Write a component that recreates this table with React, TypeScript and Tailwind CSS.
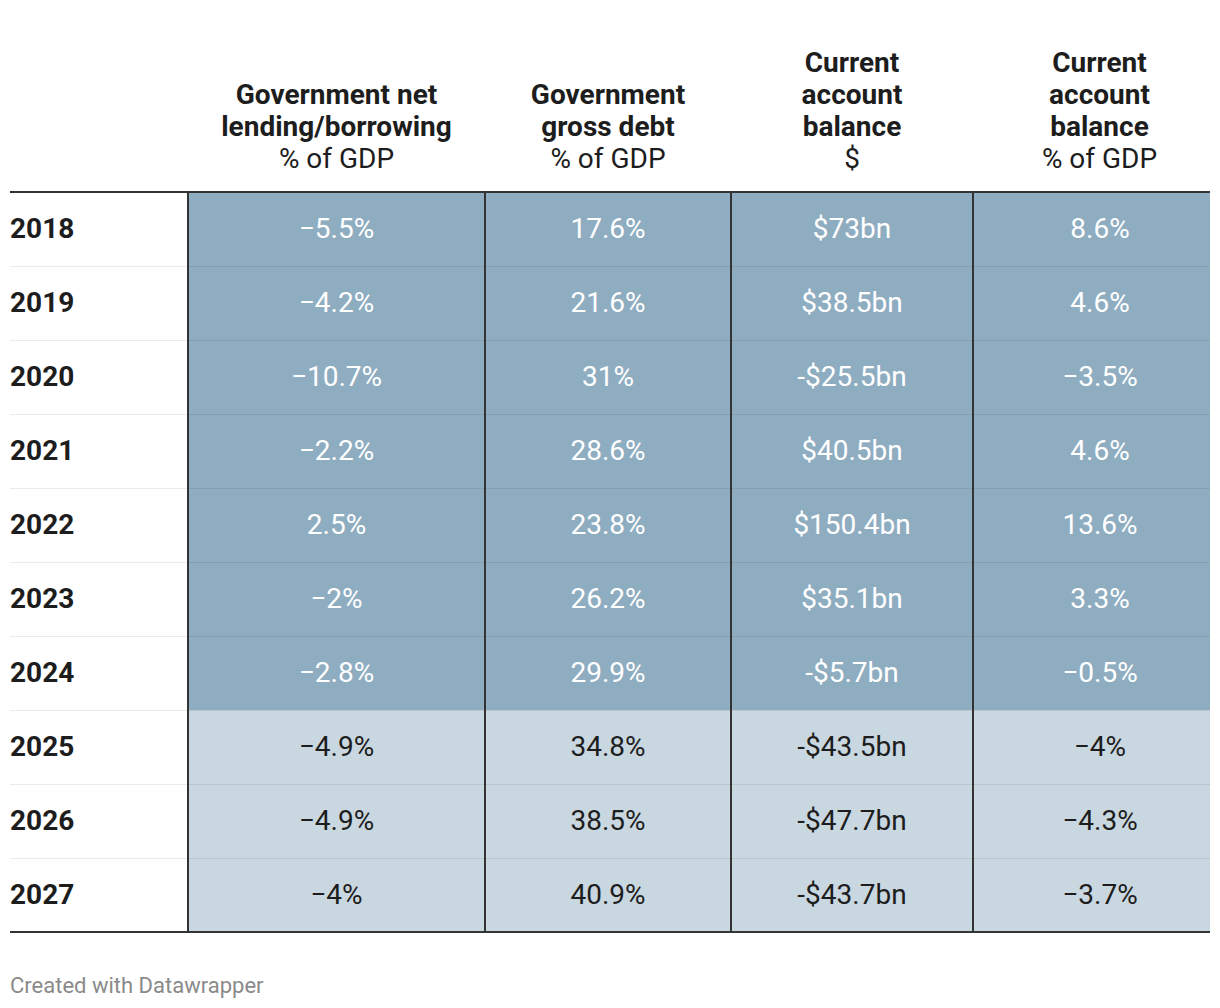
const COLUMNS = [
  { title: ['Government net', 'lending/borrowing'], unit: '% of GDP' },
  { title: ['Government', 'gross debt'], unit: '% of GDP' },
  { title: ['Current', 'account', 'balance'], unit: '$' },
  { title: ['Current', 'account', 'balance'], unit: '% of GDP' },
]

const ROWS: { year: string; values: string[]; forecast?: boolean }[] = [
  { year: '2018', values: ['\u22125.5%', '17.6%', '$73bn', '8.6%'] },
  { year: '2019', values: ['\u22124.2%', '21.6%', '$38.5bn', '4.6%'] },
  { year: '2020', values: ['\u221210.7%', '31%', '-$25.5bn', '\u22123.5%'] },
  { year: '2021', values: ['\u22122.2%', '28.6%', '$40.5bn', '4.6%'] },
  { year: '2022', values: ['2.5%', '23.8%', '$150.4bn', '13.6%'] },
  { year: '2023', values: ['\u22122%', '26.2%', '$35.1bn', '3.3%'] },
  { year: '2024', values: ['\u22122.8%', '29.9%', '-$5.7bn', '\u22120.5%'] },
  { year: '2025', values: ['\u22124.9%', '34.8%', '-$43.5bn', '\u22124%'], forecast: true },
  { year: '2026', values: ['\u22124.9%', '38.5%', '-$47.7bn', '\u22124.3%'], forecast: true },
  { year: '2027', values: ['\u22124%', '40.9%', '-$43.7bn', '\u22123.7%'], forecast: true },
]

export default function App() {
  return (
    <div
      className="min-h-[1008px] w-[1220px] bg-white px-[10px] pt-[47px] text-[#1d1d1d]"
      style={{ fontFamily: 'Roboto, "Liberation Sans", sans-serif' }}
    >
      <table className="w-[1200px] table-fixed border-collapse text-[28px] leading-[32px]">
        <colgroup>
          <col className="w-[178px]" />
          <col className="w-[297px]" />
          <col className="w-[246px]" />
          <col className="w-[242px]" />
          <col className="w-[237px]" />
        </colgroup>
        <thead>
          <tr className="border-b-2 border-[#333333]">
            <th className="p-0" />
            {COLUMNS.map((col, i) => (
              <th
                key={i}
                className={
                  i === COLUMNS.length - 1
                    ? 'pb-[16px] pl-[16px] pr-0 pt-0 text-center align-bottom font-normal'
                    : 'px-0 pb-[16px] pt-0 text-center align-bottom font-normal'
                }
              >
                {col.title.map((line) => (
                  <div key={line} className="whitespace-nowrap font-bold">
                    {line}
                  </div>
                ))}
                <div>{col.unit}</div>
              </th>
            ))}
          </tr>
        </thead>
        <tbody>
          {ROWS.map((row, r) => (
            <tr
              key={row.year}
              className={
                r === ROWS.length - 1
                  ? 'h-[74px] border-b-2 border-[#333333]'
                  : 'h-[74px] border-b border-black/[0.08]'
              }
            >
              <td className="p-0 text-left font-bold">{row.year}</td>
              {row.values.map((v, c) => (
                <td
                  key={c}
                  className={[
                    'border-l-2 border-l-[#333333] py-0 pr-0 text-center',
                    c === row.values.length - 1 ? 'pl-[16px]' : 'pl-0',
                    row.forecast ? 'bg-[#c9d7e0] text-[#1d1d1d]' : 'bg-[#8fadc1] text-white',
                  ].join(' ')}
                >
                  {v}
                </td>
              ))}
            </tr>
          ))}
        </tbody>
      </table>
      <p className="mt-[40px] text-[22px] leading-[26px] text-[#8a8a8a]">Created with Datawrapper</p>
    </div>
  )
}
